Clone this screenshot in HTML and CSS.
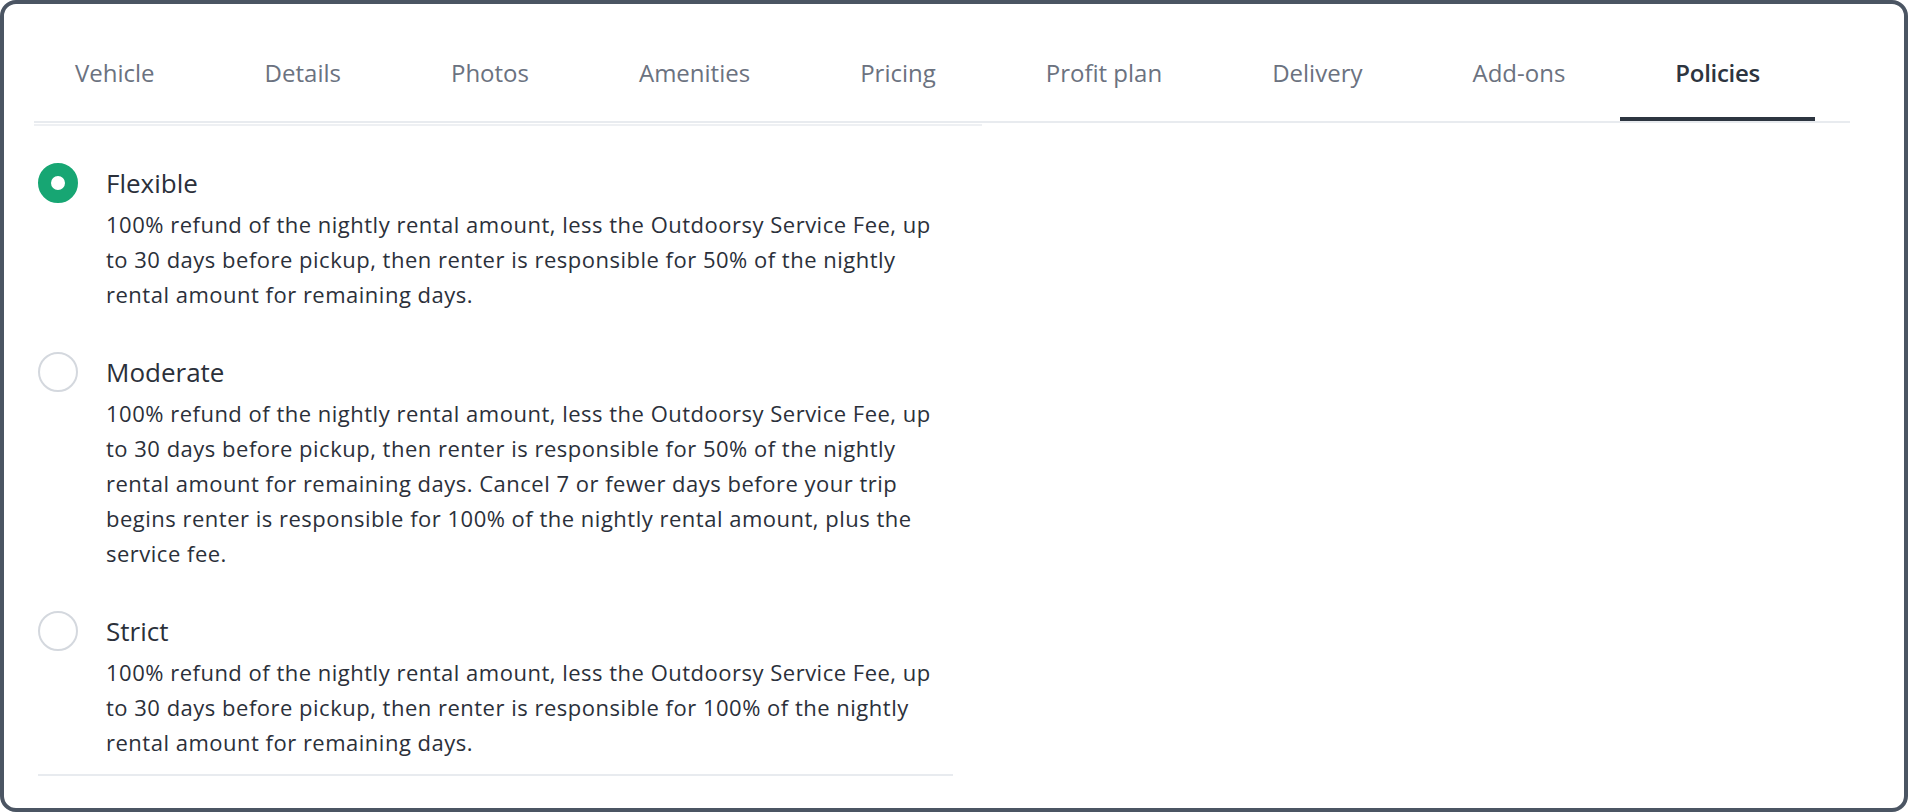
FILE: index.html
```html
<!DOCTYPE html>
<html lang="en">
<head>
    <meta charset="UTF-8">
    <meta name="viewport" content="width=device-width, initial-scale=1.0">
    <title>Listing - Policies</title>
    <link rel="stylesheet" href="styles.css">
</head>
<body>
    <div class="frame">
        <nav class="tabs">
            <a class="tab" href="#">Vehicle</a>
            <a class="tab" href="#">Details</a>
            <a class="tab" href="#">Photos</a>
            <a class="tab" href="#">Amenities</a>
            <a class="tab" href="#">Pricing</a>
            <a class="tab" href="#">Profit plan</a>
            <a class="tab" href="#">Delivery</a>
            <a class="tab" href="#">Add-ons</a>
            <a class="tab active" href="#">Policies</a>
        </nav>
        <div class="scroll-edge"></div>

        <form class="policy-list">
            <label class="policy">
                <input type="radio" name="cancel" value="flexible" checked>
                <span class="radio"></span>
                <span class="policy-text">
                    <span class="policy-title">Flexible</span>
                    <span class="policy-desc">100% refund of the nightly rental amount, less the Outdoorsy Service Fee, up to 30 days before pickup, then renter is responsible for 50% of the nightly rental amount for remaining days.</span>
                </span>
            </label>

            <label class="policy">
                <input type="radio" name="cancel" value="moderate">
                <span class="radio"></span>
                <span class="policy-text">
                    <span class="policy-title">Moderate</span>
                    <span class="policy-desc">100% refund of the nightly rental amount, less the Outdoorsy Service Fee, up to 30 days before pickup, then renter is responsible for 50% of the nightly rental amount for remaining days. Cancel 7 or fewer days before your trip begins renter is responsible for 100% of the nightly rental amount, plus the service fee.</span>
                </span>
            </label>

            <label class="policy">
                <input type="radio" name="cancel" value="strict">
                <span class="radio"></span>
                <span class="policy-text">
                    <span class="policy-title">Strict</span>
                    <span class="policy-desc">100% refund of the nightly rental amount, less the Outdoorsy Service Fee, up to 30 days before pickup, then renter is responsible for 100% of the nightly rental amount for remaining days.</span>
                </span>
            </label>
        </form>
    </div>
</body>
</html>
```

FILE: styles.css
```css
body {
    margin: 0;
    background-color: #ffffff;
    font-family: "Open Sans", Arial, sans-serif;
}

.frame {
    height: 812px;
    box-sizing: border-box;
    border: 4px solid #4b5563;
    border-radius: 16px;
    background-color: #ffffff;
    overflow: hidden;
}

.tabs {
    display: flex;
    margin: 0 54px 0 30px;
    border-bottom: 2px solid #e8ebef;
}

.tab {
    display: block;
    padding: 52px 55px 31px;
    line-height: 34px;
    font-size: 24px;
    color: #6b7280;
    text-decoration: none;
    white-space: nowrap;
}

.tab:first-child {
    padding-left: 41px;
}

.tab.active {
    color: #2d3540;
    font-weight: 600;
    letter-spacing: -0.3px;
    box-shadow: inset 0 -4px 0 #2d3540;
}

.scroll-edge {
    width: 948px;
    height: 2px;
    margin: 1px 0 0 30px;
    background-color: #eef0f3;
}

.policy-list {
    width: 915px;
    margin: 37px 0 0 34px;
    padding-bottom: 14px;
    border-bottom: 2px solid #e8ebef;
}

.policy {
    display: flex;
    gap: 28px;
    margin-bottom: 40px;
    cursor: pointer;
}

.policy:last-child {
    margin-bottom: 0;
}

.policy input {
    display: none;
}

.radio {
    flex: none;
    width: 40px;
    height: 40px;
    box-sizing: border-box;
    border: 2px solid #d4d8de;
    border-radius: 50%;
    background-color: #ffffff;
}

.policy input:checked + .radio {
    border: 13px solid #17a673;
}

.policy-text {
    display: block;
    max-width: 835px;
}

.policy-title {
    display: block;
    font-size: 26px;
    line-height: 40px;
    color: #2b303a;
}

.policy-desc {
    display: block;
    margin-top: 4px;
    font-size: 22px;
    letter-spacing: 0.5px;
    line-height: 35px;
    color: #2b303a;
}
```
